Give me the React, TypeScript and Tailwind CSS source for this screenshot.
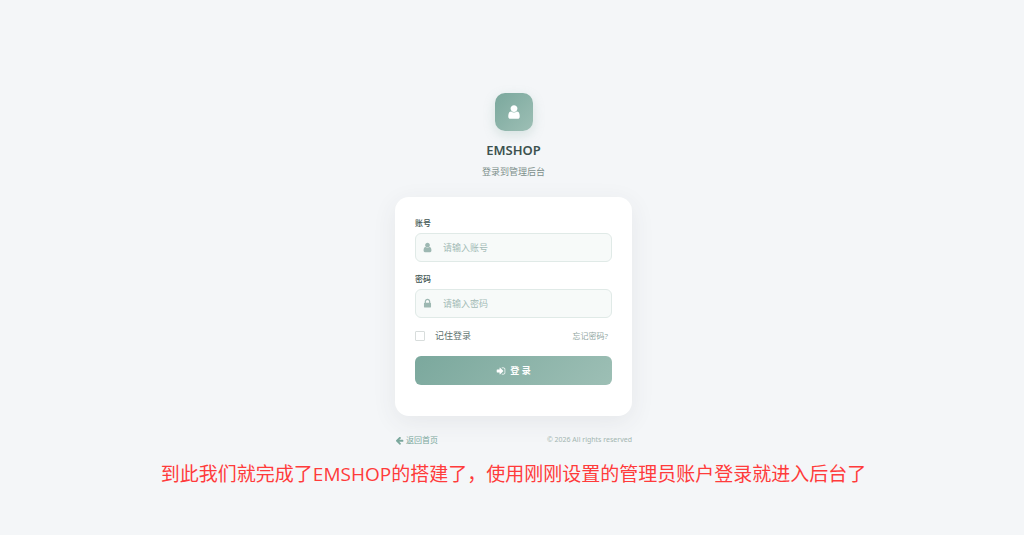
import React, { useState } from 'react';

const ICONS = {
  user: 'M1536 1399q0 109-62.5 187t-150.5 78h-854q-88 0-150.5-78t-62.5-187q0-85 8.5-160.5t31.5-152 58.5-131 94-89 134.5-34.5q131 128 313 128t313-128q76 0 134.5 34.5t94 89 58.5 131 31.5 152 8.5 160.5zm-256-887q0 159-112.5 271.5t-271.5 112.5-271.5-112.5-112.5-271.5 112.5-271.5 271.5-112.5 271.5 112.5 112.5 271.5z',
  lock: 'M640 768h512v-192q0-106-75-181t-181-75-181 75-75 181v192zm832 96v576q0 40-28 68t-68 28h-960q-40 0-68-28t-28-68v-576q0-40 28-68t68-28h32v-192q0-184 132-316t316-132 316 132 132 316v192h32q40 0 68 28t28 68z',
  signIn: 'M1312 896q0 26-19 45l-544 544q-19 19-45 19t-45-19-19-45v-288h-448q-26 0-45-19t-19-45v-384q0-26 19-45t45-19h448v-288q0-26 19-45t45-19 45 19l544 544q19 19 19 45zm352-352v704q0 119-84.5 203.5t-203.5 84.5h-320q-13 0-22.5-9.5t-9.5-22.5q0-4-1-20t-.5-26.5 3-23.5 10-19.5 20.5-6.5h320q66 0 113-47t47-113v-704q0-66-47-113t-113-47h-312l-11.5-1-11.5-3-8-5.5-7-9-2-13.5q0-4-1-20t-.5-26.5 3-23.5 10-19.5 20.5-6.5h320q119 0 203.5 84.5t84.5 203.5z',
  arrowLeft: 'M1664 896v128q0 53-32.5 90.5t-84.5 37.5h-704l293 294q38 36 38 90t-38 90l-75 76q-37 37-90 37-52 0-91-37l-651-652q-37-37-37-90 0-52 37-91l651-650q38-38 91-38 52 0 90 38l75 74q38 38 38 91t-38 91l-293 293h704q52 0 84.5 37.5t32.5 90.5z',
};

function Icon({ name, className }: { name: keyof typeof ICONS; className: string }) {
  return (
    <svg viewBox="0 0 1792 1792" fill="currentColor" aria-hidden="true" className={className}>
      <path d={ICONS[name]} />
    </svg>
  );
}

interface FieldProps {
  id: string;
  label: string;
  type: string;
  icon: keyof typeof ICONS;
  placeholder: string;
}

function Field({ id, label, type, icon, placeholder }: FieldProps) {
  const [value, setValue] = useState('');

  return (
    <div className="mb-[11px]">
      <label htmlFor={id} className="block text-[8px] leading-3 font-medium text-[#3d524f] mb-1">
        {label}
      </label>
      <div className="flex items-center h-[29px] rounded-md border border-[#e0eae7] bg-[#f7faf9] px-[6px]">
        <Icon name={icon} className="w-[11px] h-[11px] shrink-0 text-[#9db8b2]" />
        <input
          id={id}
          type={type}
          value={value}
          placeholder={placeholder}
          onChange={(e) => setValue(e.target.value)}
          className="flex-1 min-w-0 ml-[10px] bg-transparent outline-none text-[9px] text-[#3d524f] placeholder:text-[#a3bbb6]"
        />
      </div>
    </div>
  );
}

export default function App() {
  const [remember, setRemember] = useState(false);

  return (
    <div className="min-h-screen bg-[#f4f6f8] font-['Open_Sans','Noto_Sans_CJK_SC',sans-serif] flex flex-col items-center pt-[93px]">
      <main className="w-full max-w-[237px] ml-[3px]">
        {/* Brand */}
        <header className="flex flex-col items-center">
          <div className="w-[38px] h-[38px] rounded-[10px] bg-linear-135 from-[#7ba89d] to-[#9dbfb5] text-white shadow-[0_4px_12px_rgba(123,168,157,0.25)] flex items-center justify-center">
            <Icon name="user" className="w-4 h-4" />
          </div>
          <h1 className="mt-[10px] font-['Noto_Sans',sans-serif] text-[13px] leading-[18px] font-semibold text-[#3d524f]">EMSHOP</h1>
          <p className="mt-[6px] text-[9px] leading-[14px] text-[#7d8f8b]">登录到管理后台</p>
        </header>

        {/* Login form */}
        <form
          onSubmit={(e) => e.preventDefault()}
          className="mt-[18px] px-5 pt-5 pb-[31px] rounded-[14px] bg-white shadow-[0_6px_24px_rgba(60,70,80,0.08)]"
        >
          <Field id="account" label="账号" type="text" icon="user" placeholder="请输入账号" />
          <Field id="password" label="密码" type="password" icon="lock" placeholder="请输入密码" />
          <div className="flex items-center justify-between h-[13px]">
            <label className="flex items-center gap-[10px] text-[9px] leading-3 text-[#5f736f]">
              <input
                type="checkbox"
                checked={remember}
                onChange={(e) => setRemember(e.target.checked)}
                className="appearance-none w-[10px] h-[10px] rounded-[1px] border border-[#d8dddc] bg-white checked:bg-[#7ba89d]"
              />
              记住登录
            </label>
            <a href="#forgot" className="mr-1 text-[8px] leading-3 text-[#8fa5a0]">忘记密码?</a>
          </div>
          <button
            type="submit"
            className="mt-[14px] w-full h-[29px] rounded-md bg-linear-135 from-[#7ba89d] to-[#9dbfb5] text-white text-[9px] font-bold flex items-center justify-center gap-1"
          >
            <Icon name="signIn" className="w-[10px] h-[10px]" />
            <span>登 录</span>
          </button>
        </form>

        <footer className="mt-[18px] flex items-center justify-between leading-3">
          <a href="#home" className="flex items-center gap-[2px] text-[8px] text-[#7ba89d]">
            <Icon name="arrowLeft" className="w-[9px] h-[9px]" />
            返回首页
          </a>
          <span className="font-['Noto_Sans',sans-serif] text-[7px] text-[#a3b5b1]">© 2026 All rights reserved</span>
        </footer>
      </main>

      <p className="mt-[14px] ml-[3px] text-[19px] leading-7 text-[#ff3b3b]">
        到此我们就完成了EMSHOP的搭建了，使用刚刚设置的管理员账户登录就进入后台了
      </p>
    </div>
  );
}
